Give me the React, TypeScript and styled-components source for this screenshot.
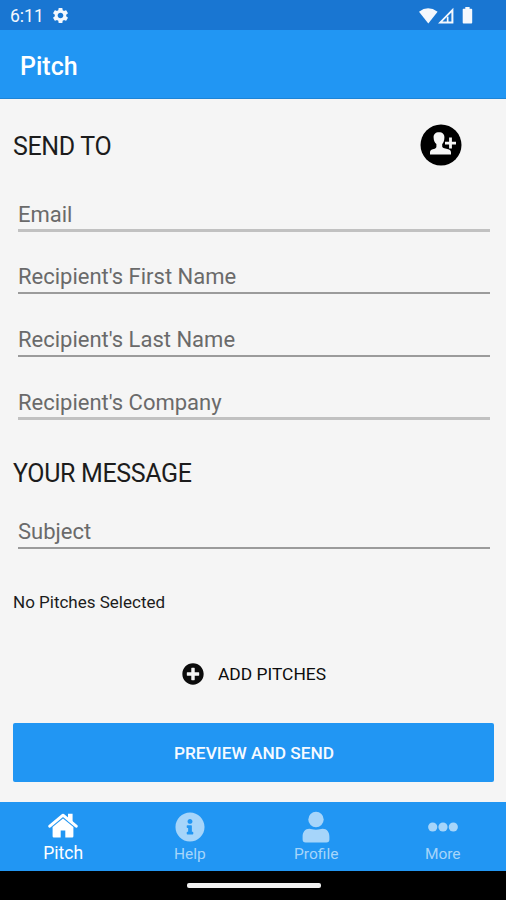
import React from 'react';
import styled, { createGlobalStyle } from 'styled-components';
import { FaInfoCircle, FaPlusCircle } from 'react-icons/fa';
import { MdSettings } from 'react-icons/md';

const GlobalStyle = createGlobalStyle`
  * { box-sizing: border-box; }
  body { margin: 0; background: #f5f5f5; font-family: Roboto, "Liberation Sans", sans-serif; }
`;

const Screen = styled.div`
  width: 506px;
  height: 900px;
  display: flex;
  flex-direction: column;
  overflow: hidden;
  background: #f5f5f5;
`;

const StatusBar = styled.div`
  height: 30px;
  flex: none;
  display: flex;
  align-items: center;
  padding: 1px 31px 0 10px;
  background: #1976d2;
  color: #f4f8fd;
`;

const Clock = styled.span`
  font-size: 17.5px;
  line-height: 20px;
  width: 41px;
  white-space: nowrap;
`;

const StatusIcons = styled.div`
  margin-left: auto;
  display: flex;
  align-items: center;
`;

const Header = styled.header`
  height: 69px;
  flex: none;
  display: flex;
  align-items: center;
  padding: 5px 20px 0;
  background: #2196f3;
  border-bottom: 1px solid #1d84d6;
`;

const Title = styled.h1`
  margin: 0;
  font-size: 25px;
  font-weight: 500;
  line-height: 30px;
  color: #fff;
`;

const Content = styled.main`
  flex: 1;
  display: flex;
  flex-direction: column;
  padding: 25px 12px 20px 13px;
`;

const SectionHeader = styled.div<{ $gap?: number }>`
  height: 42px;
  flex: none;
  margin-top: ${(p) => p.$gap ?? 0}px;
  display: flex;
  align-items: center;
  justify-content: space-between;
  padding-right: 32px;
`;

const SectionTitle = styled.h2`
  margin: 3px 0 0;
  font-size: 25px;
  letter-spacing: -0.35px;
  font-weight: 400;
  line-height: 30px;
  color: #1c1c1c;
`;

const RoundButton = styled.button`
  width: 42px;
  height: 42px;
  padding: 0;
  border: 0;
  background: none;
`;

const Field = styled.div<{ $height: number; $heavy?: boolean }>`
  height: ${(p) => p.$height}px;
  flex: none;
  margin: 0 4px 0 5px;
  display: flex;
  align-items: flex-end;
  padding-bottom: ${(p) => (p.$heavy ? 1 : 2)}px;
  border-bottom: ${(p) => (p.$heavy ? '3px solid #c1c1c1' : '2px solid #9b9b9b')};
  font-size: 22px;
  line-height: 26px;
  color: #6a6a6a;
`;

const Note = styled.p`
  margin: 42px 0 0;
  font-size: 17px;
  line-height: 22px;
  color: #1c1c1c;
`;

const AddButton = styled.button`
  height: 24px;
  margin: 49px 0 0;
  padding: 0 0 0 1px;
  border: 0;
  background: none;
  display: flex;
  align-items: center;
  justify-content: center;
  gap: 14px;
  font: 400 17.4px/24px Roboto, sans-serif;
  color: #0c0c0c;
`;

const SendButton = styled.button`
  height: 59px;
  margin: auto 0 0;
  padding: 0 0 0 1px;
  border: 0;
  border-radius: 2px;
  background: #2196f3;
  color: #f6faff;
  font: 500 17.3px/24px Roboto, sans-serif;
`;

const TabBar = styled.nav`
  height: 69px;
  flex: none;
  display: grid;
  grid-template-columns: repeat(4, 1fr);
  background: #2196f3;
`;

const Tab = styled.div<{ $active?: boolean }>`
  display: flex;
  flex-direction: column;
  align-items: center;
  padding-top: ${(p) => (p.$active ? 9 : 10)}px;
  color: ${(p) => (p.$active ? '#fff' : '#a6d5fa')};
  font-size: ${(p) => (p.$active ? 17.5 : 15.5)}px;
`;

const TabIcon = styled.div`
  height: 32px;
  display: flex;
  align-items: center;
  justify-content: center;
  margin-top: -1px;
  margin-bottom: 1px;
`;

const TabLabel = styled.span`
  line-height: 20px;
`;

const SystemBar = styled.div`
  height: 29px;
  flex: none;
  display: flex;
  justify-content: center;
  padding-top: 12px;
  background: #000;
`;

const HomeHandle = styled.div`
  width: 134px;
  height: 5px;
  margin-left: 1px;
  border-radius: 2px;
  background: #f1f1f1;
`;

const AddPersonIcon = () => (
  <svg width="42" height="42" viewBox="0 0 42 42">
    <circle cx="21" cy="21" r="20.5" fill="#000" />
    <path
      fill="#f7f7f7"
      d="M19 8.2c3.6 0 5.500 2 5.400 5.200-.1 3.200-.9 5.200-2.200 6.600v2.200c0 1.100.9 1.600 2.200 2l3.800 1.100c2.100.6 2.800 1.700 2.800 3.300v2H10v-2c0-1.600.7-2.700 2.800-3.300l2-.6c1.100-.5 1.600-1 1.600-2.100V20c-1.600-1.400-2.700-3.400-2.800-6.600-.1-3.200 1.800-5.200 5.400-5.200z"
    />
    <path d="M30.500 14v10.200M26 19.100h9" stroke="#000" strokeWidth="4.400" />
    <path d="M30.500 13.600v11M25 19.100h11" stroke="#f7f7f7" strokeWidth="2.800" />
  </svg>
);

const SignalIcons = () => (
  <svg width="56" height="18" viewBox="0 0 56 18" fill="currentColor">
    <path d="M0 4.700Q9 -2 18.600 4.700L9.300 16.600z" />
    <path d="M34.400.8v15.600H19zM32.400 5.400L23.400 14.500h9z" fillRule="evenodd" />
    <path d="M27.800 9.600h1.700v5.400h-1.700z" />
    <path d="M46.300 0h4.300v1.700h1.800q.8 0 .8.8v13q0 .9-.8.9h-7.900q-.8 0-.8-.9v-13q0-.8.8-.8h1.800z" />
  </svg>
);

const HomeIcon = () => (
  <svg width="30" height="26" viewBox="0 0 30 26" fill="currentColor">
    <path
      d="M1.800 13.200L15 2.200l13.200 11"
      fill="none"
      stroke="currentColor"
      strokeWidth="3"
      strokeLinecap="round"
      strokeLinejoin="round"
    />
    <path d="M20 .7h4.600v10.800L20 7.800z" />
    <path d="M15 5.400l10.400 8.700v9.200q0 1.200-1.200 1.200h-6.900v-7h-4.600v7H5.800q-1.200 0-1.200-1.200v-9.200z" />
  </svg>
);

const ProfileIcon = () => (
  <svg width="28" height="32" viewBox="0 0 28 32" fill="currentColor">
    <circle cx="14" cy="8.500" r="7.700" />
    <path d="M7.400 17.700c2 0 3.300 1 6.600 1s4.600-1 6.600-1c4.400 0 6.800 3.400 6.800 8v2.800q0 3-3 3H3.600q-3 0-3-3v-2.800c0-4.600 2.400-8 6.800-8z" />
  </svg>
);

const MoreIcon = () => (
  <svg width="30" height="10" viewBox="0 0 30 10" fill="currentColor">
    <circle cx="4.700" cy="5" r="4.600" />
    <circle cx="15" cy="5" r="4.600" />
    <circle cx="25.300" cy="5" r="4.600" />
  </svg>
);

const tabs = [
  { label: 'Pitch', icon: <HomeIcon />, active: true },
  { label: 'Help', icon: <FaInfoCircle size={30} /> },
  { label: 'Profile', icon: <ProfileIcon /> },
  { label: 'More', icon: <MoreIcon /> },
];

export default function App() {
  return (
    <Screen>
      <GlobalStyle />
      <StatusBar>
        <Clock>6:11</Clock>
        <MdSettings size={19} />
        <StatusIcons>
          <SignalIcons />
        </StatusIcons>
      </StatusBar>
      <Header>
        <Title>Pitch</Title>
      </Header>
      <Content>
        <SectionHeader>
          <SectionTitle>SEND TO</SectionTitle>
          <RoundButton aria-label="Add recipient">
            <AddPersonIcon />
          </RoundButton>
        </SectionHeader>
        <Field $height={66} $heavy>Email</Field>
        <Field $height={62}>Recipient's First Name</Field>
        <Field $height={63}>Recipient's Last Name</Field>
        <Field $height={63} $heavy>Recipient's Company</Field>
        <SectionHeader $gap={31}>
          <SectionTitle>YOUR MESSAGE</SectionTitle>
        </SectionHeader>
        <Field $height={56}>Subject</Field>
        <Note>No Pitches Selected</Note>
        <AddButton>
          <FaPlusCircle size={22} />
          ADD PITCHES
        </AddButton>
        <SendButton>PREVIEW AND SEND</SendButton>
      </Content>
      <TabBar>
        {tabs.map((tab) => (
          <Tab key={tab.label} $active={tab.active}>
            <TabIcon>{tab.icon}</TabIcon>
            <TabLabel>{tab.label}</TabLabel>
          </Tab>
        ))}
      </TabBar>
      <SystemBar>
        <HomeHandle />
      </SystemBar>
    </Screen>
  );
}
